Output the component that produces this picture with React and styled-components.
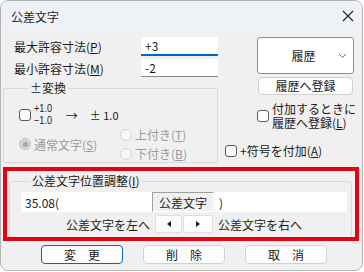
import React from "react";
import styled, { createGlobalStyle } from "styled-components";

const GlobalStyle = createGlobalStyle`
  body {
    margin: 0;
    background: #ffffff;
    font-family: "Noto Sans CJK JP", "Noto Sans", sans-serif;
    font-size: 12px;
    color: #1a1a1a;
  }
`;

const Window = styled.div`
  width: 361px;
  height: 269px;
  border: 1px solid #b4b4b4;
  border-radius: 8px;
  overflow: hidden;
  background: #f0f0f0;
  display: flex;
  flex-direction: column;
`;

const TitleBar = styled.div`
  height: 30px;
  flex: none;
  display: flex;
  align-items: center;
  justify-content: space-between;
  padding: 0 8px 0 10px;
  background: #eef2f7;
  font-size: 12px;
`;

const Top = styled.div`
  display: flex;
  padding-top: 6px;
`;

const LeftCol = styled.div`
  width: 217px;
  flex: none;
  display: flex;
  flex-direction: column;
`;

const FieldRow = styled.div`
  display: grid;
  grid-template-columns: 127px 77px;
  align-items: center;
  padding-left: 13px;
  height: ${(p) => p.$h}px;
  margin-bottom: 4px;
`;

const Input = styled.div`
  height: 100%;
  background: #ffffff;
  border-bottom: ${(p) => (p.$focus ? "2px solid #0067c0" : "1px solid #8a8a8a")};
  box-sizing: border-box;
  padding-left: 4px;
  display: flex;
  align-items: center;
  font-size: 12px;
`;

const Group = styled.fieldset`
  margin: 2px 0 0 2px;
  padding: ${(p) => p.$pad};
  border: 1px solid #d9d9d9;
  border-radius: 2px;
  height: ${(p) => p.$h}px;
  box-sizing: border-box;
  min-width: 0;
`;

const Legend = styled.legend`
  padding: 0 2px;
  margin-left: 9px;
  line-height: 14px;
  font-size: 12px;
`;

const ConvRow = styled.div`
  display: flex;
  align-items: center;
  height: 24px;
  margin-top: 8px;
`;

const Stack = styled.div`
  display: flex;
  flex-direction: column;
  font-family: "Liberation Sans", sans-serif;
  font-size: 10px;
  line-height: 12px;
  margin-left: 3px;
  transform: scaleX(0.92);
  transform-origin: left center;
`;

const Arrow = styled.span`
  margin-left: 12px;
  font-size: 12px;
`;

const PlusMinus = styled.span`
  margin-left: 12px;
  font-size: 11px;
`;

const RadioArea = styled.div`
  display: grid;
  grid-template-columns: 101px auto;
  align-items: center;
`;

const RadioCol = styled.div`
  display: flex;
  flex-direction: column;
  gap: 4px;
`;

const Option = styled.div`
  display: flex;
  align-items: center;
  gap: 3px;
  color: ${(p) => (p.$disabled ? "#9a9a9a" : "#1a1a1a")};
  line-height: 15px;
`;

const Radio = styled.span`
  width: 12px;
  height: 12px;
  border-radius: 50%;
  box-sizing: border-box;
  border: 1px solid #d2d2d2;
  background: #f7f7f7;
  flex: none;
  display: flex;
  align-items: center;
  justify-content: center;
  &::after {
    content: "";
    width: ${(p) => (p.$checked ? 5 : 0)}px;
    height: ${(p) => (p.$checked ? 5 : 0)}px;
    border-radius: 50%;
    background: #a8a8a8;
  }
  ${(p) => p.$checked && "background: #d4d4d4; border-color: #c8c8c8;"}
`;

const Check = styled.span`
  width: 12px;
  height: 12px;
  box-sizing: border-box;
  border: 1px solid #5a5a5a;
  border-radius: 3px;
  background: #fbfbfb;
  flex: none;
`;

const RightCol = styled.div`
  flex: 1;
  display: flex;
  flex-direction: column;
  padding-left: 7px;
`;

const Combo = styled.div`
  margin-left: 32px;
  width: 97px;
  height: 37px;
  box-sizing: border-box;
  border: 1px solid #8c8c8c;
  border-radius: 3px;
  background: #ffffff;
  display: flex;
  align-items: center;
  justify-content: center;
  position: relative;
  font-size: 12px;
  padding-right: 4px;
  svg {
    position: absolute;
    right: 6px;
    top: 15px;
  }
`;

const Button = styled.div`
  width: ${(p) => p.$w}px;
  height: ${(p) => p.$h}px;
  box-sizing: border-box;
  margin-left: ${(p) => p.$ml || 0}px;
  margin-top: ${(p) => p.$mt || 0}px;
  border: 1px solid ${(p) => (p.$primary ? "#0067c0" : "#d0d0d0")};
  border-radius: 4px;
  background: #fdfdfd;
  display: flex;
  align-items: center;
  justify-content: center;
  font-size: 12px;
  line-height: 1;
`;

const CheckOption = styled.div`
  display: flex;
  align-items: center;
  gap: 3px;
  margin-left: ${(p) => p.$ml}px;
  margin-top: ${(p) => p.$mt}px;
  line-height: 14px;
`;

const Highlight = styled.div`
  margin: 4px 3px 0 2px;
  border: 4px solid #e60012;
  height: 74px;
  box-sizing: border-box;
  overflow: hidden;
  padding-top: 1px;
`;

const PosRow = styled.div`
  display: grid;
  grid-template-columns: 131px 62px 133px;
  height: ${(p) => p.$h}px;
  margin-bottom: 3px;
  align-items: stretch;
`;

const PlainInput = styled.div`
  background: #ffffff;
  display: flex;
  align-items: center;
  padding-left: 4px;
  margin-left: ${(p) => p.$ml || 0}px;
`;

const Sunken = styled.div`
  display: flex;
  align-items: center;
  justify-content: center;
  background: #f0f0f0;
  border: 1px solid;
  border-color: #a0a0a0 #ffffff #ffffff #a0a0a0;
`;

const NudgeRow = styled.div`
  display: grid;
  grid-template-columns: 131px 30px 31px auto;
  height: 18px;
  align-items: center;
`;

const NudgeLabel = styled.div`
  text-align: ${(p) => p.$align};
  padding: ${(p) => (p.$align === "right" ? "0 2px 0 0" : "0 0 0 5px")};
`;

const Nudge = styled.div`
  height: 18px;
  box-sizing: border-box;
  margin-left: ${(p) => p.$ml}px;
  border: 1px solid #dedede;
  border-radius: 3px;
  background: #fdfdfd;
  display: flex;
  align-items: center;
  justify-content: center;
`;

const Footer = styled.div`
  display: flex;
  gap: 20px;
  padding-left: 40px;
  margin-top: 4px;
`;

function Tri({ dir }) {
  return (
    <svg width="4" height="6" viewBox="0 0 4 6">
      <path d={dir === "left" ? "M4 0 L0 3 L4 6 Z" : "M0 0 L4 3 L0 6 Z"} fill="#1a1a1a" />
    </svg>
  );
}

function App() {
  return (
    <>
      <GlobalStyle />
      <Window>
        <TitleBar>
          <span>公差文字</span>
          <svg width="12" height="12" viewBox="0 0 12 12">
            <path d="M1 1 L11 11 M11 1 L1 11" stroke="#222" strokeWidth="1.1" />
          </svg>
        </TitleBar>
        <Top>
          <LeftCol>
            <FieldRow $h={18}>
              <span>最大許容寸法(<u>P</u>)</span>
              <Input $focus>+3</Input>
            </FieldRow>
            <FieldRow $h={16}>
              <span>最小許容寸法(<u>M</u>)</span>
              <Input>-2</Input>
            </FieldRow>
            <Group $h={82} $pad="0 0 0 15px">
              <Legend>±変換</Legend>
              <ConvRow>
                <Check />
                <Stack>
                  <span>+1.0</span>
                  <span>−1.0</span>
                </Stack>
                <Arrow>→</Arrow>
                <PlusMinus>± 1.0</PlusMinus>
              </ConvRow>
              <RadioArea>
                <Option $disabled>
                  <Radio $checked />
                  <span>通常文字(<u>S</u>)</span>
                </Option>
                <RadioCol>
                  <Option $disabled>
                    <Radio />
                    <span>上付き(<u>T</u>)</span>
                  </Option>
                  <Option $disabled>
                    <Radio />
                    <span>下付き(<u>B</u>)</span>
                  </Option>
                </RadioCol>
              </RadioArea>
            </Group>
          </LeftCol>
          <RightCol>
            <Combo>
              履歴
              <svg width="9" height="6" viewBox="0 0 9 6">
                <path d="M1 1 L4.5 4.5 L8 1" stroke="#666" fill="none" strokeWidth="1" />
              </svg>
            </Combo>
            <Button $w={95} $h={18} $ml={33} $mt={3}>
              履歴へ登録
            </Button>
            <CheckOption $ml={32} $mt={7}>
              <Check />
              <span>
                付加するときに
                <br />
                履歴へ登録(<u>L</u>)
              </span>
            </CheckOption>
            <CheckOption $ml={0} $mt={14}>
              <Check />
              <span>+符号を付加(<u>A</u>)</span>
            </CheckOption>
          </RightCol>
        </Top>
        <Highlight>
          <Group $h={80} $pad="4px 0 0 11px" style={{ marginRight: 3 }}>
            <Legend>公差文字位置調整(<u>I</u>)</Legend>
            <PosRow $h={20}>
              <PlainInput>35.08(</PlainInput>
              <Sunken>公差文字</Sunken>
              <PlainInput $ml={1}>)</PlainInput>
            </PosRow>
            <NudgeRow>
              <NudgeLabel $align="right">公差文字を左へ</NudgeLabel>
              <Nudge $ml={3}>
                <Tri dir="left" />
              </Nudge>
              <Nudge $ml={1}>
                <Tri dir="right" />
              </Nudge>
              <NudgeLabel $align="left">公差文字を右へ</NudgeLabel>
            </NudgeRow>
          </Group>
        </Highlight>
        <Footer>
          <Button $w={82} $h={19} $primary>
            変　更
          </Button>
          <Button $w={82} $h={19}>
            削　除
          </Button>
          <Button $w={82} $h={19}>
            取　消
          </Button>
        </Footer>
      </Window>
    </>
  );
}

export default App;
